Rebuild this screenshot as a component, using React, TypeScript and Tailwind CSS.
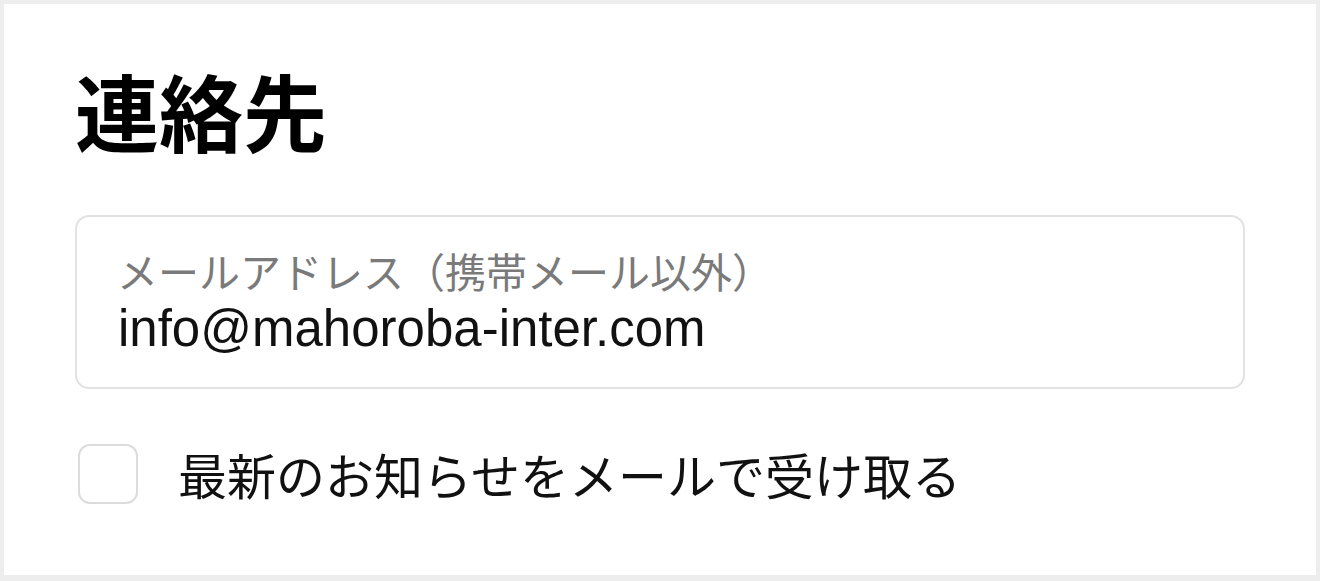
import React from "react";

const jp = { fontFamily: '"Noto Sans CJK JP", "Noto Sans", sans-serif' };
const latin = { fontFamily: '"Liberation Sans", Arial, "Noto Sans CJK JP", sans-serif' };

export default function App() {
    return (
        <div className="w-[1320px] h-[581px] bg-[#ededed] pt-[4px] pl-[4px] pr-[4px] pb-[6px]">
            <div className="h-full bg-white pl-[71px] pt-[64px] flex flex-col">
                {/* Heading */}
                <h1 className="text-[84px] leading-none font-bold text-black" style={jp}>
                    連絡先
                </h1>

                {/* Email field */}
                <div className="mt-[63px] w-[1170px] h-[174px] border-2 border-[#e2e2e2] rounded-[14px] pl-[40px] pt-[33px] flex flex-col">
                    <label className="text-[41px] leading-none text-[#7a7a7a]" style={jp}>
                        メールアドレス（携帯メール以外）
                    </label>
                    <div className="mt-[12px] text-[51px] leading-none text-[#111] ml-[1px]" style={latin}>
                        info@mahoroba-inter.com
                    </div>
                </div>

                {/* Newsletter checkbox */}
                <label className="mt-[55px] ml-[3px] flex items-center gap-[40px]">
                    <span className="w-[60px] h-[60px] border-2 border-[#dcdcdc] rounded-[12px] bg-white shrink-0" />
                    <span className="text-[49px] leading-none text-[#111] -mt-[2px]" style={jp}>
                        最新のお知らせをメールで受け取る
                    </span>
                </label>
            </div>
        </div>
    );
}
